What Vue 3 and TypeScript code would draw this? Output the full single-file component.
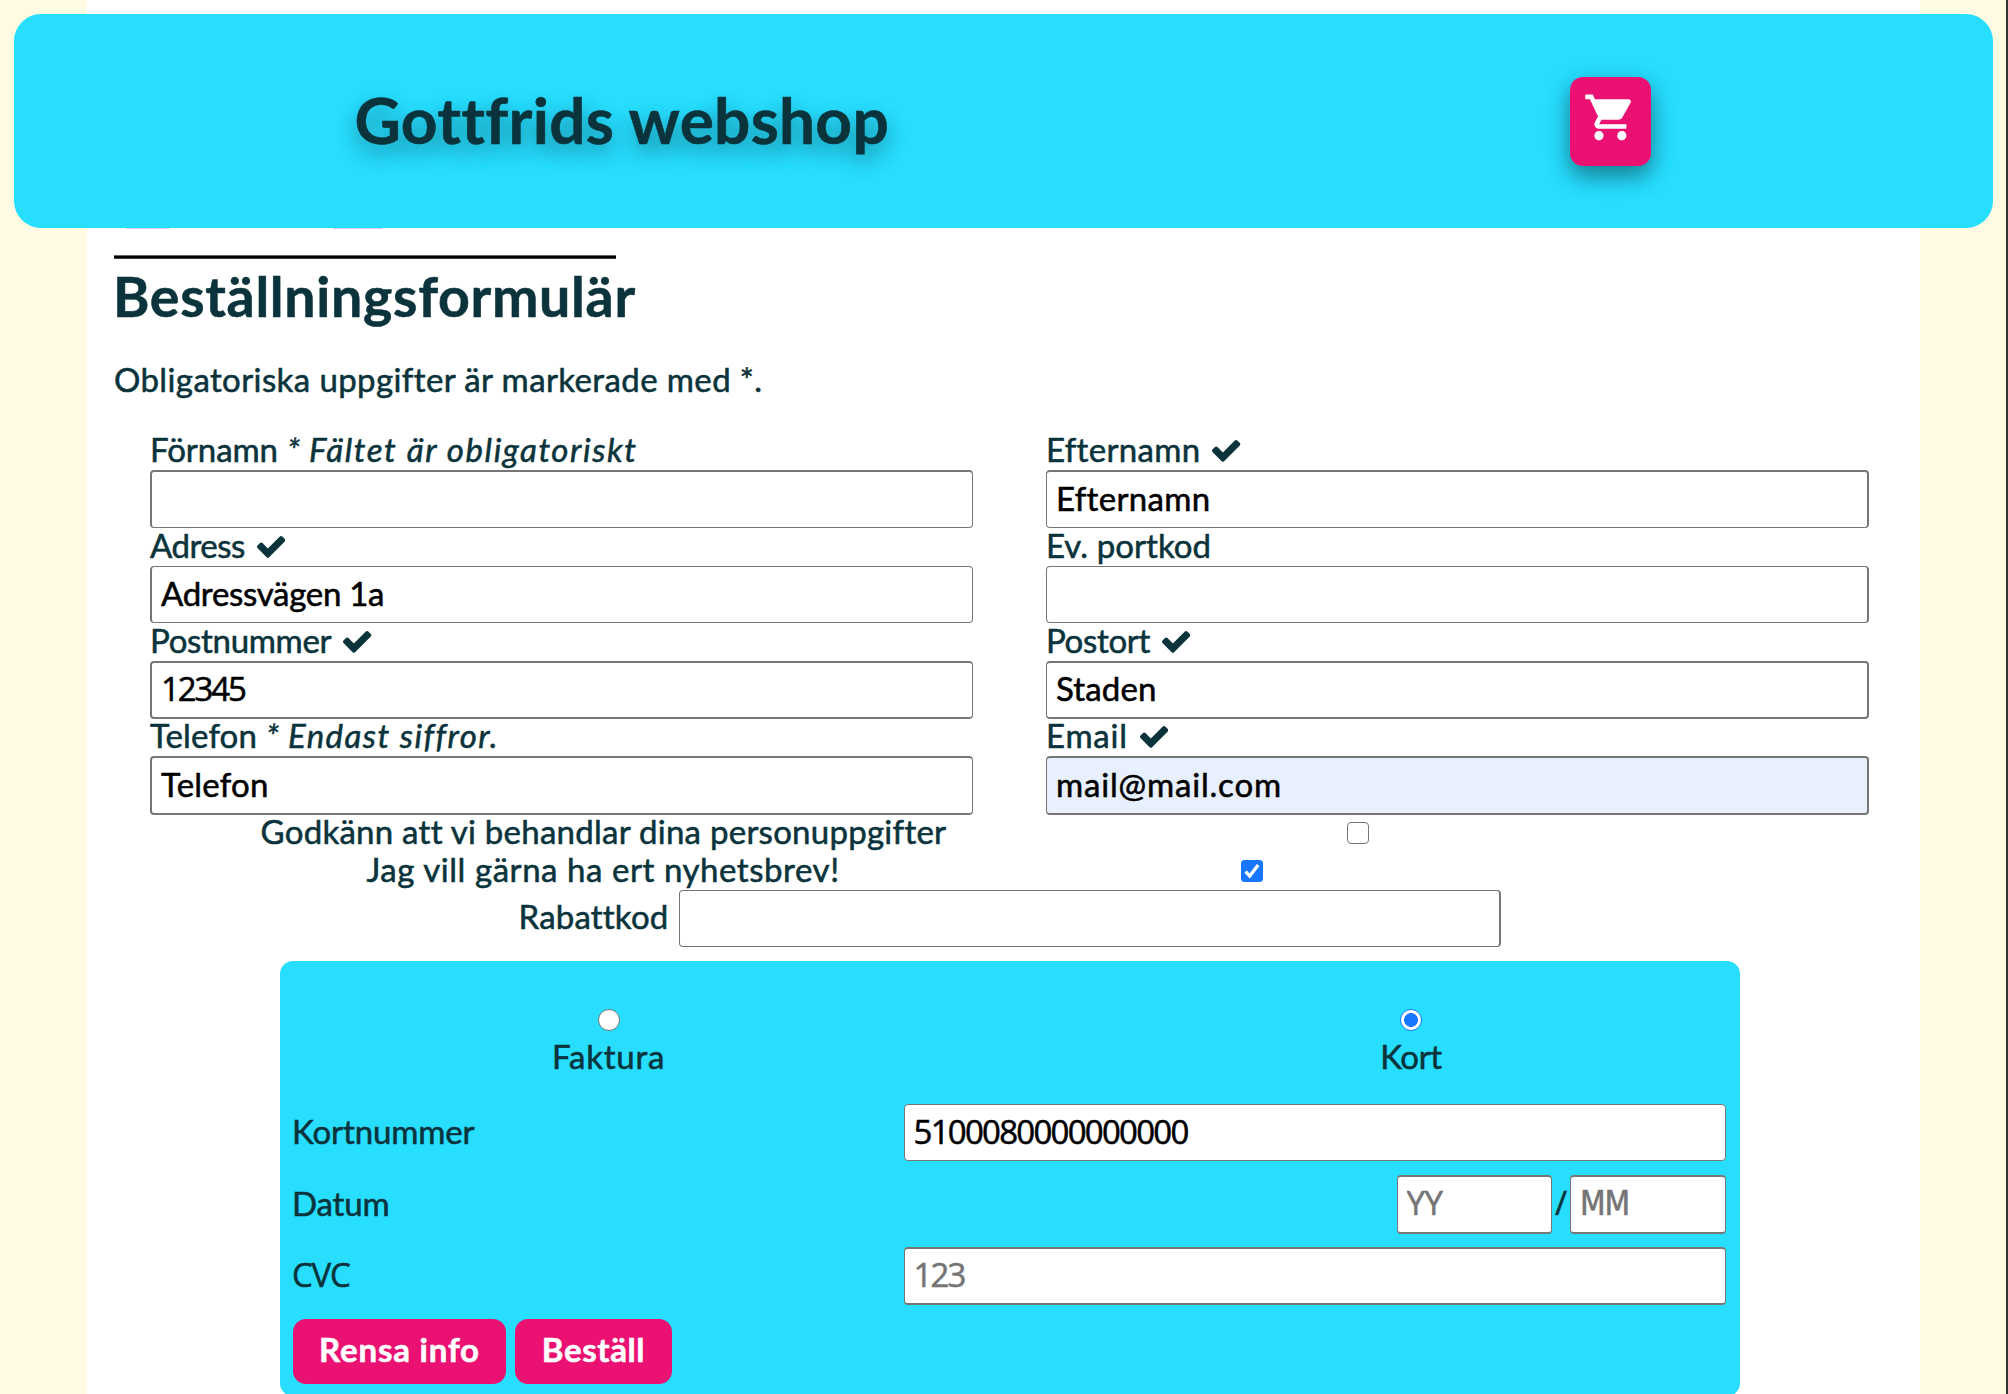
<script setup lang="ts">
import { reactive } from 'vue'

interface Field {
  id: string
  label: string
  labelLs: number
  value: string
  valueLs: number
  valid?: boolean
  error?: string
  errorLs?: number
  cls?: string
}

const fields = reactive<Field[]>([
  { id: 'fornamn', label: 'Förnamn', labelLs: -0.05, value: '', valueLs: 0, error: 'Fältet är obligatoriskt', errorLs: 1.62, cls: 'top2' },
  { id: 'efternamn', label: 'Efternamn', labelLs: 0.32, value: 'Efternamn', valueLs: 0.33, valid: true, cls: 'top2 right2' },
  { id: 'adress', label: 'Adress', labelLs: -0.5, value: 'Adressvägen 1a', valueLs: -0.3, valid: true },
  { id: 'portkod', label: 'Ev. portkod', labelLs: 0.05, value: '', valueLs: 0, cls: 'right2' },
  { id: 'postnummer', label: 'Postnummer', labelLs: -0.31, value: '12345', valueLs: -2.12, valid: true, cls: 'top2 bottom2 digits' },
  { id: 'postort', label: 'Postort', labelLs: -0.32, value: 'Staden', valueLs: 0.14, valid: true, cls: 'top2 bottom2 right2' },
  { id: 'telefon', label: 'Telefon', labelLs: 0.12, value: 'Telefon', valueLs: 0.22, error: 'Endast siffror.', errorLs: 1.46, cls: 'top2 bottom2' },
  { id: 'email', label: 'Email', labelLs: 0.8, value: 'mail@mail.com', valueLs: 0.82, valid: true, cls: 'top2 bottom2 right2 autofill' },
])

const order = reactive({
  terms: false,
  newsletter: true,
  discount: '',
  payment: 'kort',
  card: '5100080000000000',
  yy: '',
  mm: '',
  cvc: '',
})
</script>

<template>
  <div class="page">
    <header class="header">
      <h1 class="title">Gottfrids webshop</h1>
      <button class="cart" type="button" aria-label="Varukorg">
        <svg viewBox="0 0 24 24" width="54.8" height="54.8" fill="#fff">
          <path d="M7 18c-1.1 0-1.99.9-1.99 2S5.9 22 7 22s2-.9 2-2-.9-2-2-2zM1 2v2h2l3.6 7.59-1.35 2.45c-.16.28-.25.61-.25.96 0 1.1.9 2 2 2h12v-2H7.42c-.14 0-.25-.11-.25-.25l.03-.12.9-1.63h7.45c.75 0 1.41-.41 1.75-1.03l3.58-6.49c.08-.14.12-.31.12-.48 0-.55-.45-1-1-1H5.21l-.94-2H1zm16 16c-1.1 0-1.99.9-1.99 2s.89 2 1.99 2 2-.9 2-2-.9-2-2-2z" />
        </svg>
      </button>
    </header>

    <main class="main">
      <div class="edge"><i class="edge-a"></i><i class="edge-b"></i></div>
      <div class="rule"></div>
      <h2 class="heading">Beställningsformulär</h2>
      <p class="note">Obligatoriska uppgifter är markerade med *.</p>

      <form class="form" @submit.prevent>
        <div class="fields">
          <div v-for="f in fields" :key="f.id" class="field">
            <label class="label" :for="f.id">
              <span :style="{ letterSpacing: f.labelLs + 'px' }">{{ f.label }}</span>
              <svg v-if="f.valid" class="check" viewBox="121 334 1550 1188">
                <path d="M1671 566q0 40-28 68l-724 724-136 136q-28 28-68 28t-68-28l-136-136-362-362q-28-28-28-68t28-68l136-136q28-28 68-28t68 28l294 295 656-657q28-28 68-28t68 28l136 136q28 28 28 68z" />
              </svg>
              <template v-if="f.error">
                <em class="star">*</em>
                <em class="error" :style="{ letterSpacing: f.errorLs + 'px' }">{{ f.error }}</em>
              </template>
            </label>
            <input :id="f.id" v-model="f.value" class="input" :class="f.cls" :style="{ letterSpacing: f.valueLs + 'px' }" />
          </div>
        </div>

        <div class="consent">
          <label class="terms" for="terms">Godkänn att vi behandlar dina personuppgifter</label>
          <input id="terms" v-model="order.terms" class="box box-terms" type="checkbox" />
        </div>
        <div class="consent">
          <label class="news" for="news">Jag vill gärna ha ert nyhetsbrev!</label>
          <span class="tick">
            <svg viewBox="0 0 22 22" width="22" height="22">
              <rect width="22" height="22" rx="3.5" fill="#1778ff" />
              <path d="M4.6 11.6 8.7 16 17.2 4.9" fill="none" stroke="#fff" stroke-width="3.3" />
            </svg>
          </span>
        </div>
        <div class="discount">
          <label for="rabatt">Rabattkod</label>
          <input id="rabatt" v-model="order.discount" class="input right2" />
        </div>

        <section class="payment">
          <div class="methods">
            <label class="method">
              <input v-model="order.payment" class="radio" type="radio" value="faktura" />
              <span class="faktura">Faktura</span>
            </label>
            <label class="method">
              <input v-model="order.payment" class="radio" type="radio" value="kort" />
              <span class="kort">Kort</span>
            </label>
          </div>

          <div class="row row-card">
            <label class="row-label" for="card">Kortnummer</label>
            <input id="card" v-model="order.card" class="input wide card" />
          </div>
          <div class="row row-date">
            <label class="row-label datum">Datum</label>
            <div class="date">
              <input v-model="order.yy" class="input short yy" placeholder="YY" />
              <span class="slash">/</span>
              <input v-model="order.mm" class="input short mm" placeholder="MM" />
            </div>
          </div>
          <div class="row row-cvc">
            <label class="row-label cvc" for="cvc">CVC</label>
            <input id="cvc" v-model="order.cvc" class="input wide cvc-input" placeholder="123" />
          </div>
          <div class="actions">
            <button class="btn clear" type="reset">Rensa info</button>
            <button class="btn send" type="submit">Beställ</button>
          </div>
        </section>
      </form>
    </main>
  </div>
</template>

<style>
body {
  overflow: hidden;
}
</style>

<style scoped>
* {
  box-sizing: border-box;
}
.page {
  position: relative;
  width: 2008px;
  height: 1394px;
  overflow: hidden;
  background: #fffbe3;
  border-right: 2px solid #343434;
  color: #0a333b;
  font: 33px/33px Lato, "Trebuchet MS", sans-serif;
  -webkit-text-stroke: 0.55px currentColor;
}
.header {
  position: absolute;
  z-index: 1;
  top: 14px;
  left: 14px;
  width: 1978.5px;
  height: 214.3px;
  display: flex;
  justify-content: space-around;
  align-items: center;
  background: #27deff;
  border-radius: 27px;
}
.title {
  width: 531px;
  margin: 0 0 3px;
  font-size: 64px;
  line-height: 76px;
  letter-spacing: 0.25px;
  text-indent: -1px;
  white-space: nowrap;
  text-shadow: 0 11px 21px rgba(0, 0, 0, 0.22), 0 8px 22px rgba(0, 0, 0, 0.2);
}
.cart {
  width: 81.5px;
  height: 89px;
  padding: 13.4px 0 0 13.6px;
  border: 0;
  border-radius: 13px;
  background: #eb1172;
  display: flex;
  align-items: flex-start;
  box-shadow: 0 10.7px 21.3px rgba(0, 0, 0, 0.27), 0 8px 26.7px rgba(0, 0, 0, 0.22);
}
.cart svg {
  flex: none;
}
.main {
  width: 1832.5px;
  height: 1394px;
  margin-left: 87px;
  padding-top: 228px;
  background: #fff;
}
.edge {
  display: flex;
  height: 1px;
  padding-left: 39px;
}
.edge i {
  height: 1px;
  background: #d9c8ee;
}
.edge-a {
  width: 43px;
}
.edge-b {
  width: 50px;
  margin-left: 164px;
}
.rule {
  width: 501.5px;
  height: 4px;
  margin: 26px 0 0 27px;
  background: linear-gradient(#666 1px, #000 1px, #000 3px, #3c3c3c 3px);
}
.heading {
  margin: 7px 0 0 26px;
  font-size: 55.5px;
  line-height: 60px;
  letter-spacing: 0.68px;
}
.note {
  margin: 33px 0 0 27px;
  line-height: 40px;
  letter-spacing: 0.39px;
}
.form {
  margin-top: 33px;
}
.fields {
  display: grid;
  grid-template-columns: 823px 823px;
  grid-template-rows: 96px 95px 96px 96px;
  column-gap: 73px;
  padding-left: 63px;
}
.field {
  display: flex;
  flex-direction: column;
}
.label {
  display: flex;
  height: 38px;
  padding-top: 1px;
  white-space: nowrap;
}
.field:nth-child(n + 7) .label {
  height: 37px;
  padding-top: 0;
}
.check {
  width: 28.3px;
  height: 21.7px;
  margin: 7px 0 0 12px;
  fill: #0a333b;
}
.star {
  margin-left: 9px;
  width: 22px;
}
.input {
  width: 823px;
  height: 58px;
  margin: 0;
  padding: 0 9px 4px;
  border: 1px solid #767676;
  border-left-width: 2px;
  border-radius: 4px;
  outline: 0;
  background: #fff;
  color: #000;
  font: 33px/40px Lato, "Trebuchet MS", sans-serif;
  -webkit-text-stroke: 0.55px currentColor;
}
.field:nth-child(3) .input,
.field:nth-child(4) .input {
  height: 57px;
}
.field:nth-child(n + 7) .input {
  height: 59px;
}
.top2 {
  border-top-width: 2px;
}
.bottom2 {
  border-bottom-width: 2px;
}
.right2 {
  border-left-width: 1px;
  border-right-width: 2px;
}
.digits {
  font-family: "Open Sans", sans-serif;
}
.autofill {
  background: #e8effd;
}
.consent {
  display: flex;
  height: 38px;
  white-space: nowrap;
}
.consent + .consent {
  height: 37px;
}
.terms {
  width: 686px;
  margin-left: 173.5px;
  letter-spacing: 0.26px;
}
.news {
  width: 473px;
  margin-left: 279.5px;
  letter-spacing: 0.55px;
}
.box {
  appearance: none;
  width: 22px;
  height: 22px;
  margin: 7px 0 0 400px;
  border: 1.5px solid #767676;
  border-radius: 4px;
  background: #fff;
}
.tick {
  margin: 7px 0 0 401.5px;
  height: 22px;
  line-height: 0;
}
.discount {
  display: flex;
  letter-spacing: 0.2px;
}
.discount label {
  width: 160px;
  margin: 10px 0 0 431.5px;
}
.discount .input {
  width: 822px;
  height: 57px;
}
.payment {
  width: 1460px;
  height: 435px;
  margin: 14px 0 0 193px;
  padding: 48px 14.5px 0 13px;
  border-radius: 13px;
  background: #27deff;
}
.methods {
  display: flex;
  gap: 682.4px;
  padding-left: 255.5px;
}
.method {
  display: flex;
  flex-direction: column;
  align-items: center;
  gap: 9px;
  width: 120px;
}
.radio {
  appearance: none;
  width: 22px;
  height: 22px;
  margin: 0;
  border: 1.5px solid #767676;
  border-radius: 50%;
  background: #fff;
}
.radio:checked {
  border-color: #1778ff;
  background: radial-gradient(circle, #1778ff 6.6px, #fff 7.2px);
}
.faktura {
  letter-spacing: 0.75px;
}
.kort {
  letter-spacing: -0.44px;
}
.row {
  display: flex;
  justify-content: space-between;
  align-items: center;
}
.row-label {
  margin-left: -1px;
  padding-bottom: 3px;
  letter-spacing: -0.13px;
}
.row-card {
  margin-top: 31px;
  height: 57px;
}
.row-date {
  margin-top: 14px;
  height: 59px;
}
.row-cvc {
  margin-top: 13px;
  height: 58px;
}
.payment .input {
  border-left-width: 1px;
}
.payment .input::placeholder {
  color: #757575;
  opacity: 1;
}
.wide {
  width: 822px;
}
.card {
  height: 57px;
  padding-bottom: 3px;
  font-family: "Open Sans", sans-serif;
  letter-spacing: -1.74px;
}
.cvc {
  font-family: "Open Sans", sans-serif;
  letter-spacing: -1.23px;
}
.cvc-input {
  border-top-width: 2px;
  border-bottom-width: 2px;
  padding-bottom: 3px;
  font-family: "Open Sans", sans-serif;
  letter-spacing: -1.9px;
}
.date {
  display: flex;
  align-items: center;
}
.short {
  width: 155.5px;
  height: 59px;
  border-top-width: 2px;
  border-bottom-width: 2px;
}
.yy {
  font-family: "Open Sans", sans-serif;
  letter-spacing: -0.45px;
}
.mm {
  padding-bottom: 3px;
  font-family: "DejaVu Sans Condensed", "DejaVu Sans", sans-serif;
  font-stretch: condensed;
  letter-spacing: -1px;
}
.slash {
  width: 18px;
  padding-bottom: 4px;
  text-align: center;
  font-family: "Open Sans", sans-serif;
}
.actions {
  display: flex;
  gap: 9px;
  margin-top: 14px;
}
.btn {
  height: 64.5px;
  padding: 0 0 4px;
  border: 0;
  border-radius: 13px;
  background: #eb1172;
  color: #fff;
  font: bold 33px/33px Lato, "Trebuchet MS", sans-serif;
  -webkit-text-stroke: 0.55px currentColor;
}
.clear {
  width: 213px;
  letter-spacing: 0.81px;
}
.send {
  width: 157px;
  letter-spacing: 0.61px;
}
</style>
